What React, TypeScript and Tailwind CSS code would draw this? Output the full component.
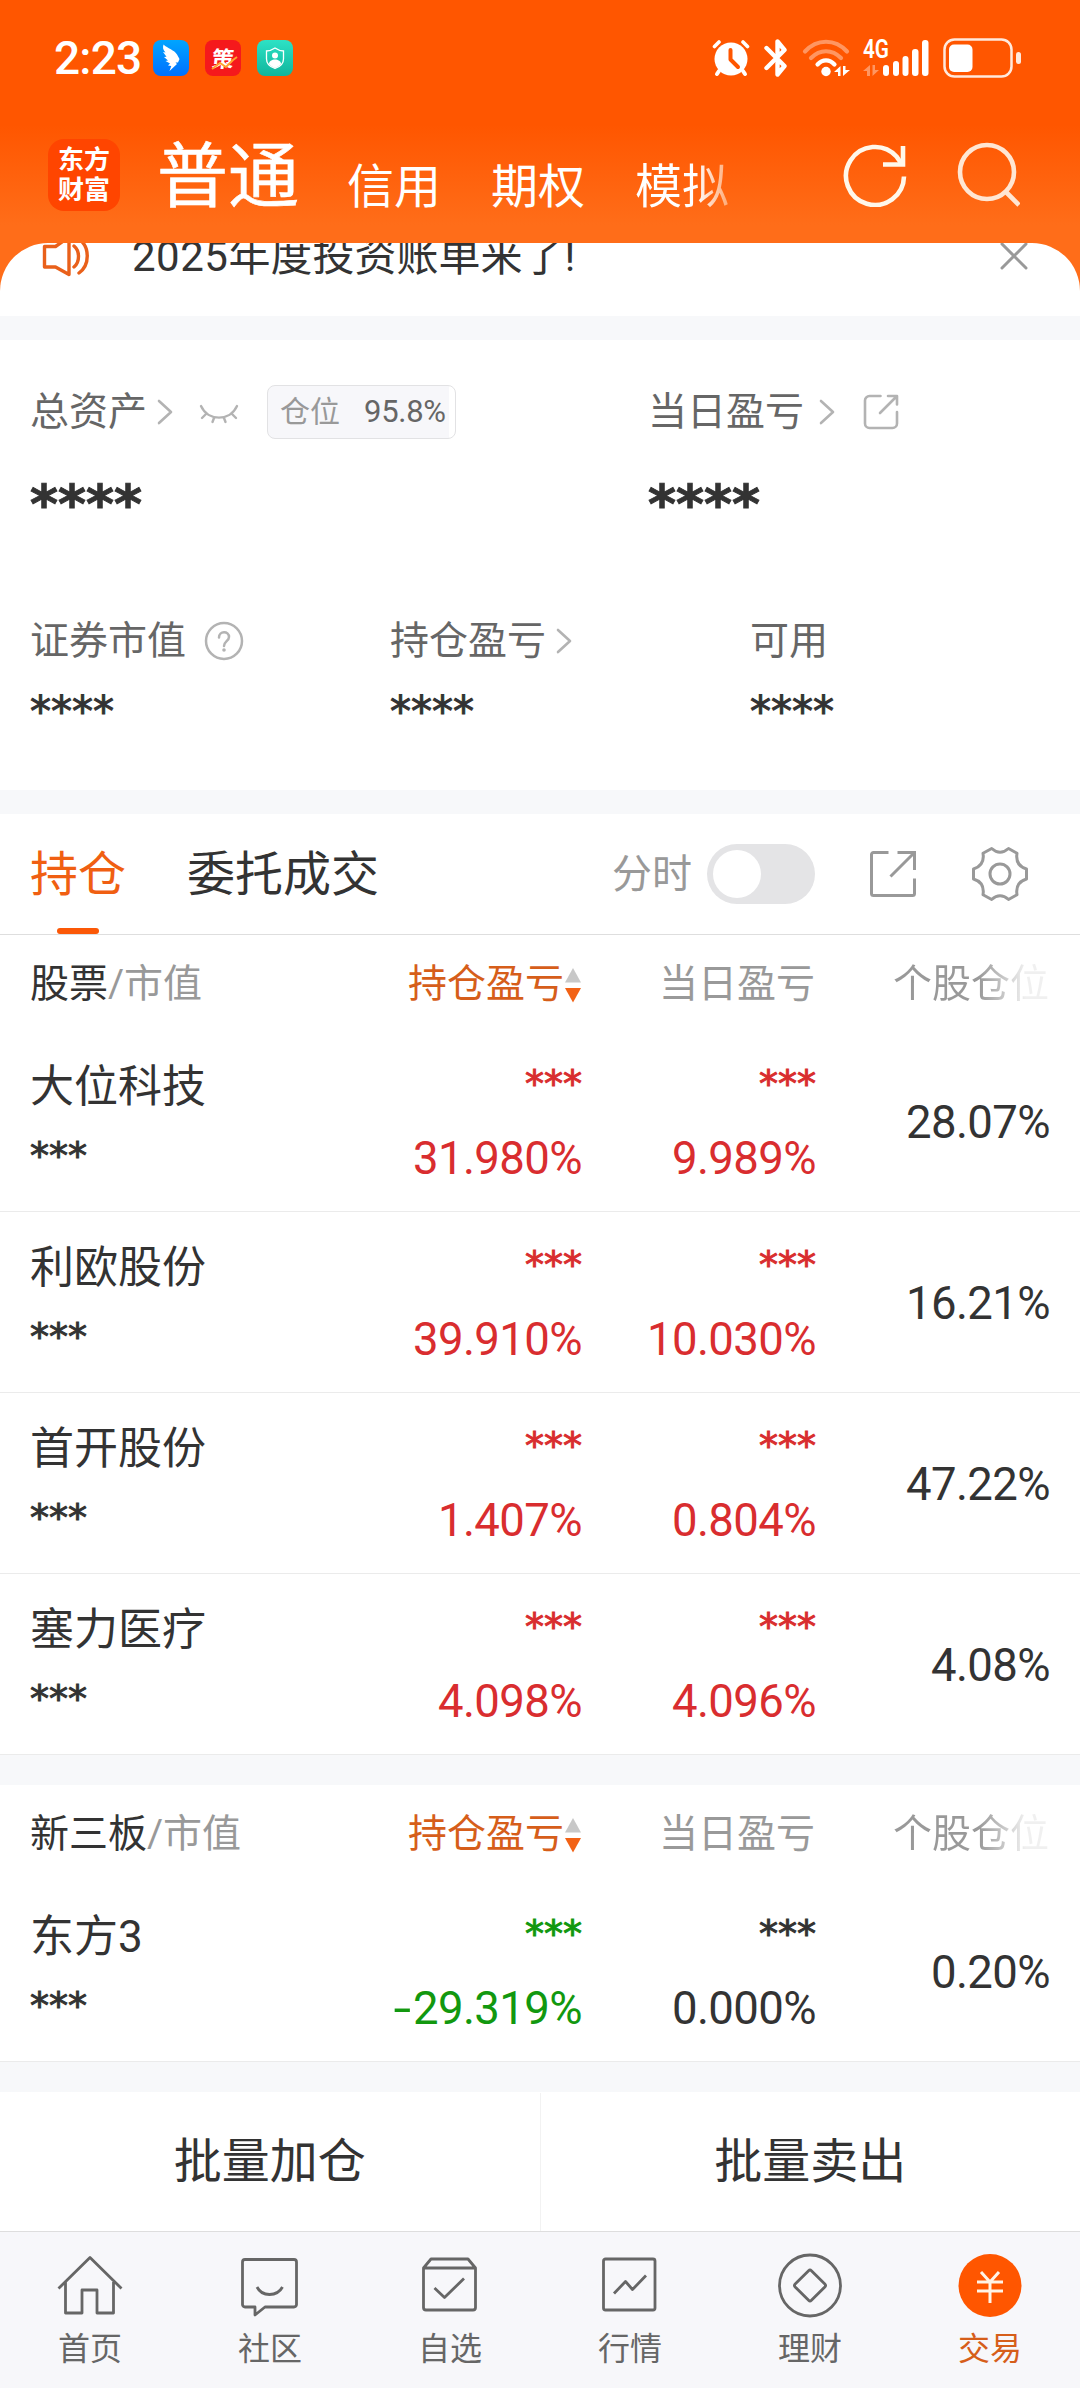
import React from 'react';
import { clsx } from 'clsx';

type Tone = 'up' | 'down' | 'flat';

interface Holding {
  name: string;
  profit: string;
  profitTone: Tone;
  today: string;
  todayTone: Tone;
  ratio: string;
}

const stocks: Holding[] = [
  { name: '大位科技', profit: '31.980%', profitTone: 'up', today: '9.989%', todayTone: 'up', ratio: '28.07%' },
  { name: '利欧股份', profit: '39.910%', profitTone: 'up', today: '10.030%', todayTone: 'up', ratio: '16.21%' },
  { name: '首开股份', profit: '1.407%', profitTone: 'up', today: '0.804%', todayTone: 'up', ratio: '47.22%' },
  { name: '塞力医疗', profit: '4.098%', profitTone: 'up', today: '4.096%', todayTone: 'up', ratio: '4.08%' }
];

const otc: Holding[] = [
  { name: '东方3', profit: '-29.319%', profitTone: 'down', today: '0.000%', todayTone: 'flat', ratio: '0.20%' }
];

const toneClass: Record<Tone, string> = {
  up: 'text-[#d92d2f]',
  down: 'text-[#12980f]',
  flat: 'text-[#333333]'
};

/* ---------- status bar ---------- */

const StatusBar = () => (
  <div className="flex h-[115px] items-center pl-[54px] pr-[59px]">
    <span className="w-[99px] text-[46px] leading-[46px] font-medium tracking-[-0.8px]">2:23</span>
    <div className="flex gap-4">
      <svg width="36" height="36" viewBox="0 0 36 36">
        <defs>
          <linearGradient id="wing" x1="0" y1="0" x2="0" y2="1">
            <stop offset="0" stopColor="#00a5ff" />
            <stop offset="1" stopColor="#0070ff" />
          </linearGradient>
        </defs>
        <rect width="36" height="36" rx="8" fill="url(#wing)" />
        <path d="M10.500 4.500c4 4 11 5.500 13.500 10l2.500 4.500-1.500 3.500h-2.500l1.500 1.500-7.500 7 1.800-5-3.300-.5 2-2-4.500-2.500 2.500-.5-4-3.500 2.500-.3-3.500-4.700 2.500.5c-2.500-2.500-3-5-2-8Z" fill="#fff" />
      </svg>
      <svg width="36" height="36" viewBox="0 0 36 36">
        <rect width="36" height="36" rx="8" fill="#f5191c" />
        <text x="20" y="27.500" fontSize="22" fontWeight="700" fill="#fff" textAnchor="middle" transform="skewX(-6)">策</text>
        <path d="M7 29l8-6 6 4 7-7 4-3" fill="none" stroke="#ffa32e" strokeWidth="2" />
      </svg>
      <svg width="36" height="36" viewBox="0 0 36 36">
        <defs>
          <linearGradient id="guard" x1="0" y1="0" x2="0" y2="1">
            <stop offset="0" stopColor="#2de2c5" />
            <stop offset="1" stopColor="#10b59c" />
          </linearGradient>
        </defs>
        <rect width="36" height="36" rx="8" fill="url(#guard)" />
        <path d="M18 8c3 2 5 3 8.500 3v8c0 5-4 8-8.500 9.500-4.500-1.500-8.500-4.500-8.500-9.500v-8c3.500 0 5.500-1 8.500-3Z" fill="none" stroke="#fff" strokeWidth="1.300" />
        <circle cx="18" cy="15.500" r="3" fill="#fff" />
        <path d="M12 24c0-6 12-6 12 0-2 2-4 3.500-6 4-2-.5-4-2-6-4Z" fill="#fff" />
      </svg>
    </div>

    <div className="ml-auto flex items-center">
      {/* alarm */}
      <svg width="38" height="38" viewBox="0 0 38 38" className="mr-[14px]">
        <path d="M7 32l-2 3M31 32l2 3" stroke="#fff" strokeWidth="4" strokeLinecap="round" />
        <path d="M2.500 7.500l4.500-4.500M35.500 7.500L31 3" stroke="#fff" strokeWidth="3.600" strokeLinecap="round" />
        <circle cx="19" cy="20" r="16.500" fill="#fff" />
        <path d="M18.500 11v9.500l7.500 7.500" fill="none" stroke="#ff5600" strokeWidth="4" strokeLinecap="round" strokeLinejoin="round" />
      </svg>
      {/* bluetooth */}
      <svg width="24" height="38" viewBox="0 0 24 38" className="mr-[14px]" fill="none" stroke="#fff" strokeWidth="4.400" strokeLinecap="round" strokeLinejoin="round">
        <path d="M2.500 29l18-18-7-8.500V14M2.500 9l18 18-7 8.500V24" />
      </svg>
      {/* wifi */}
      <svg width="48" height="38" viewBox="0 0 48 38" className="mr-[13px]" fill="none" stroke="#fff" strokeWidth="4.200" strokeLinecap="round">
        <path d="M3 12.500c12-13 30-13 42 0" opacity=".38" />
        <path d="M9 19c9-9 21-9 30 0" opacity=".38" />
        <path d="M15.500 25.500c5-5.500 12-5.500 17 0" />
        <circle cx="24" cy="32.500" r="4.700" fill="#fff" stroke="none" />
        <path d="M38.500 27v10h-2.500v-4h-4ZM41 37V27h2.500v4H48Z" fill="#fff" stroke="none" />
      </svg>
      {/* 4G signal */}
      <svg width="66" height="38" viewBox="0 0 66 38" className="mr-[14px] overflow-visible">
        <text x="0" y="19" fontSize="25.500" fontWeight="600" fill="#fff" textLength="26" lengthAdjust="spacingAndGlyphs">4G</text>
        <path d="M7 26v11H4v-5H0ZM9.500 37V26h2.500v5h4Z" fill="#fff" opacity=".38" />
        <g fill="#fff">
          <rect x="20" y="26" width="6" height="11" rx="3" />
          <rect x="30" y="22" width="6" height="15" rx="3" />
          <rect x="39.500" y="17" width="6" height="20" rx="3" />
          <rect x="49" y="10" width="6.500" height="27" rx="3" />
          <rect x="59" y="1" width="6.500" height="36" rx="3" />
        </g>
      </svg>
      {/* battery */}
      <svg width="78" height="40" viewBox="0 0 78 40">
        <rect x="1.500" y="1.500" width="67" height="37" rx="10" fill="none" stroke="#ffe9dc" strokeWidth="2.500" />
        <rect x="6" y="6.500" width="23.500" height="27.500" rx="5" fill="#fff" />
        <rect x="73" y="14" width="5" height="12" rx="2.500" fill="#ffe9dc" />
      </svg>
    </div>
  </div>
);

/* ---------- header ---------- */

const Header = () => (
  <header className="h-[243px] bg-[linear-gradient(180deg,#ff5600_0px,#ff5600_125px,#ff6d19_225px,#ff6d19_243px)] text-white">
    <StatusBar />
    <div className="flex h-[128px] items-start pl-12 pr-[60px]">
      <div className="mt-6 flex h-[72px] w-[72px] flex-col items-center justify-center rounded-2xl bg-[#ff4500] text-[26px] leading-[30px] font-bold">
        <span>东方</span>
        <span>财富</span>
      </div>
      <span className="mt-[26px] ml-[37px] text-[71px] leading-[71px] [-webkit-text-stroke:0.6px_#fff]">普通</span>
      <nav className="mt-[48px] ml-[48px] flex gap-[50px] text-[47px] leading-[47px]">
        <span>信用</span>
        <span>期权</span>
        <span className="bg-[linear-gradient(90deg,#fff_65%,#ffa873_100%)] bg-clip-text text-transparent">模拟</span>
      </nav>
      <svg width="64" height="64" viewBox="0 0 64 64" className="mt-[28px] ml-auto" fill="none" stroke="#fff8ea" strokeWidth="4.600">
        <path d="M61 33.500A29 29 0 1 1 53.500 13.500L58 20" />
        <path d="M60 3v18.500H40" />
      </svg>
      <svg width="64" height="66" viewBox="0 0 64 66" className="mt-[27px] ml-[49px]" fill="none" stroke="#ffe6d3" strokeWidth="4.600">
        <circle cx="31" cy="30" r="27" />
        <path d="M49 49l14 14" />
      </svg>
    </div>
  </header>
);

/* ---------- small icons ---------- */

const Chevron = ({ className }: { className?: string }) => (
  <svg width="16" height="26" viewBox="0 0 16 26" className={className} fill="none" stroke="#b3b3b3" strokeWidth="2.600" strokeLinecap="round" strokeLinejoin="round">
    <path d="M2 2l12 11L2 24" />
  </svg>
);

const Notice = () => (
  <div className="flex h-[73px] items-start overflow-hidden rounded-t-[48px] bg-white">
    <svg width="48" height="42" viewBox="0 0 48 42" className="mt-[-8px] ml-[42px] shrink-0" fill="none" stroke="#e9601a" strokeWidth="3.400" strokeLinejoin="round" strokeLinecap="round">
      <path d="M2.500 11.500h11L27 2v37.500L13.500 32h-11Z" />
      <path d="M32 11c6 5 6 16 0 21" />
      <path d="M37 4c11 8 11 26 0 34" />
    </svg>
    <span className="mt-[-7px] ml-[42px] text-[42px] leading-[42px] whitespace-nowrap text-[#333333]">
      <span className="tracking-[0.5px]">2025</span>年度投资账单来了!
    </span>
    <svg width="28" height="28" viewBox="0 0 28 28" className="mt-[-1px] mr-[52px] ml-auto shrink-0" stroke="#999" strokeWidth="3" strokeLinecap="round">
      <path d="M2 2l24 24M26 2L2 26" />
    </svg>
  </div>
);

/* ---------- asset overview ---------- */

interface MaskProps {
  text: string;
  className?: string;
}

// Hidden amounts are drawn with six-armed asterisks
const Mask = ({ text, className }: MaskProps) => (
  <span className={clsx("block font-['DejaVu_Sans',sans-serif] whitespace-nowrap [-webkit-text-stroke:1px_currentColor]", className)}>
    {text}
  </span>
);

const Overview = () => (
  <section className="h-[450px] bg-white pl-[30px] text-[39px] leading-[40px] text-[#666666]">
    <div className="flex pt-[45px]">
      <div className="w-[618px]">
        <div className="flex h-[54px] items-center">
          <span>总资产</span>
          <Chevron className="ml-[10px]" />
          <svg width="40" height="20" viewBox="0 0 40 20" className="mt-[3px] ml-[26px]" fill="none" stroke="#b3b3b3" strokeWidth="2.400" strokeLinecap="round">
            <path d="M2 2c7 15.500 29 15.500 36 0M7 10l-4 4M15 14l-1.500 4M25 14l1.500 4M33 10l4 4" />
          </svg>
          <div className="ml-[28px] flex h-[54px] w-[189px] items-center rounded-lg border border-[#e2e2e4] bg-[linear-gradient(90deg,#f7f7fa_181px,#fff_181px)] pl-3 text-[30px] leading-[30px]">
            <span className="text-[#999999]">仓位</span>
            <span className="ml-6 text-[31px] tracking-[-0.3px]">95.8%</span>
          </div>
        </div>
        <Mask text="****" className="mt-[40px] text-[53.5px] leading-[52px] font-bold text-[#333333]" />
      </div>
      <div>
        <div className="flex h-[54px] items-center">
          <span>当日盈亏</span>
          <Chevron className="ml-[15px]" />
          <svg width="36" height="36" viewBox="0 0 36 36" className="ml-[28px]" fill="none" stroke="#b3b3b3" strokeWidth="2.600" strokeLinecap="round" strokeLinejoin="round">
            <path d="M17.500 2H6.500a4.500 4.500 0 0 0-4.500 4.500v23a4.500 4.500 0 0 0 4.500 4.500h23a4.500 4.500 0 0 0 4.500-4.500V18" />
            <path d="M25 2h9v8.500M33 3L17 19" />
          </svg>
        </div>
        <Mask text="****" className="mt-[40px] text-[53.5px] leading-[52px] font-bold text-[#333333]" />
      </div>
    </div>

    <div className="mt-[90px] grid w-[1080px] grid-cols-3">
      <div>
        <div className="flex h-10 items-center">
          <span>证券市值</span>
          <svg width="40" height="40" viewBox="0 0 40 40" className="ml-[18px]" fill="none" stroke="#b3b3b3" strokeWidth="2.500">
            <circle cx="20" cy="20" r="18" />
            <path d="M15 16.500c0-7 10-7 10-.5 0 4-5 4.500-5 9" strokeLinecap="round" />
            <circle cx="20" cy="29" r="1.800" fill="#b3b3b3" stroke="none" />
          </svg>
        </div>
        <Mask text="****" className="mt-[30px] text-[42px] leading-[42px] text-[#333333]" />
      </div>
      <div>
        <div className="flex h-10 items-center">
          <span>持仓盈亏</span>
          <Chevron className="ml-[10px]" />
        </div>
        <Mask text="****" className="mt-[30px] text-[42px] leading-[42px] text-[#333333]" />
      </div>
      <div>
        <div className="flex h-10 items-center">可用</div>
        <Mask text="****" className="mt-[30px] text-[42px] leading-[42px] text-[#333333]" />
      </div>
    </div>
  </section>
);

/* ---------- tabs ---------- */

const TabBar = () => (
  <div className="flex h-[121px] items-center border-b border-[#dedede] bg-white pl-[30px] text-[48px] leading-[48px]">
    <div className="flex h-[120px] flex-col items-center text-[#f05f12]">
      <span className="mt-[37px]">持仓</span>
      <span className="mt-[29px] h-[6px] w-[42px] rounded-full bg-[#fb5807]" />
    </div>
    <span className="mt-[2px] ml-[61px] text-[#333333]">委托成交</span>
    <span className="mt-[2px] ml-[233px] text-[40px] text-[#999999]">分时</span>
    <div className="ml-[15px] h-[60px] w-[108px] rounded-full bg-[#e4e4e6] p-[6px]">
      <div className="h-12 w-12 rounded-full bg-white" />
    </div>
    <svg width="48" height="48" viewBox="0 0 48 48" className="ml-[54px]" fill="none" stroke="#999" strokeWidth="3">
      <path d="M19.500 2.500H4.500a2 2 0 0 0-2 2v39a2 2 0 0 0 2 2h39a2 2 0 0 0 2-2V28.500" />
      <path d="M28.500 2.500h17V20M44.500 3.500L21.500 26.500" />
    </svg>
    <svg width="56" height="56" viewBox="0 0 56 56" className="ml-[55px]" fill="none" stroke="#999" strokeWidth="3" strokeLinejoin="round">
      <path d="M19.700 2.500Q28 10 36.500 2.500L45 7.200Q43 19.500 54.500 23v10Q43 36.500 45 48.800L36.500 53.500Q28 46 19.700 53.500L11 48.800Q13 36.500 1.500 33V23Q13 19.500 11 7.200Z" />
      <circle cx="28" cy="28" r="10" />
    </svg>
  </div>
);

/* ---------- holdings ---------- */

// The minus sign is a bit wider than the font's hyphen
const Percent = ({ value }: { value: string }) => {
  if (!value.startsWith('-')) return <>{value}</>;
  return (
    <>
      <span className="mr-[5px] inline-block scale-x-[1.400]">-</span>
      {value.slice(1)}
    </>
  );
};

const HoldingTable = ({ title, rows }: { title: string; rows: Holding[] }) => (
  <section className="bg-white">
    <div className="flex h-24 items-center pt-[2px] pl-[30px] text-[39px] leading-[40px] text-[#999999]">
      <span className="w-[378px]">
        <span className="text-[#333333]">{title}</span>/市值
      </span>
      <span className="text-[#d65e1a]">持仓盈亏</span>
      <svg width="18" height="36" viewBox="0 0 18 36" className="mt-[2px]">
        <path d="M9 1l8 14.500H1Z" fill="#c8c8c8" />
        <path d="M9 35.500L1 21h16Z" fill="#f26215" />
      </svg>
      <span className="w-[233px] text-right">当日盈亏</span>
      <span className="ml-[78px] bg-[linear-gradient(90deg,#999_55%,#f0f0f0_85%)] bg-clip-text text-transparent">个股仓位</span>
    </div>
    {rows.map(row => (
      <div key={row.name} className="flex h-[181px] border-b border-[#ebebeb] pl-[30px] text-[45.5px] leading-[46px] tracking-[-0.6px] text-[#333333]">
        <div className="w-[318px]">
          <div className="mt-[34px] text-[44px] leading-[44px] tracking-normal">{row.name}</div>
          <Mask text="***" className="mt-[28px] text-[38px] leading-[38px] tracking-normal" />
        </div>
        <div className={clsx('w-[234px] text-right', toneClass[row.profitTone])}>
          <Mask text="***" className="mt-[34px] text-[38px] leading-[38px] tracking-normal" />
          <div className="mt-[33px]">
            <Percent value={row.profit} />
          </div>
        </div>
        <div className={clsx('w-[234px] text-right', toneClass[row.todayTone])}>
          <Mask text="***" className="mt-[34px] text-[38px] leading-[38px] tracking-normal" />
          <div className="mt-[33px]">
            <Percent value={row.today} />
          </div>
        </div>
        <div className="mt-[69px] w-[234px] text-right">{row.ratio}</div>
      </div>
    ))}
  </section>
);

/* ---------- bottom ---------- */

const BatchActions = () => (
  <div className="flex h-[139px] bg-white pt-px text-[48px] leading-[48px] text-[#333333]">
    <div className="flex flex-1 items-center justify-center border-r border-[#f2f2f2]">批量加仓</div>
    <div className="flex flex-1 items-center justify-center">批量卖出</div>
  </div>
);

const navItems: { label: string; active?: boolean; icon: React.ReactNode }[] = [
  {
    label: '首页',
    icon: <path d="M4.500 38.500L36 7.500l31.500 31M11.500 32v31H28V40h15v23h16.500V32" />
  },
  {
    label: '社区',
    icon: (
      <>
        <path d="M11 9.500h49a2.500 2.500 0 0 1 2.500 2.500v42.500a2.500 2.500 0 0 1-2.500 2.500H31l-10 8v-8H11a2.500 2.500 0 0 1-2.500-2.500V12A2.500 2.500 0 0 1 11 9.500Z" />
        <path d="M23 37c5 10 20 10 25.500 0" />
      </>
    )
  },
  {
    label: '自选',
    icon: (
      <>
        <path d="M9.500 18L17 9h37l7.500 9v39.500a2.500 2.500 0 0 1-2.500 2.500H12a2.500 2.500 0 0 1-2.500-2.500ZM9.500 18h52" />
        <path d="M20.500 38l10 9.500L50 28.500" />
      </>
    )
  },
  {
    label: '行情',
    icon: (
      <>
        <rect x="9.500" y="9" width="51.500" height="51" rx="2" />
        <path d="M20 43.500L31.500 31.500l7 8L52 25.500" />
      </>
    )
  },
  {
    label: '理财',
    icon: (
      <>
        <circle cx="36" cy="35.500" r="30.500" />
        <rect x="24.500" y="24" width="23" height="23" rx="2" transform="rotate(45 36 35.500)" />
      </>
    )
  },
  {
    label: '交易',
    active: true,
    icon: (
      <>
        <circle cx="36" cy="35.500" r="31.500" fill="#ff5600" stroke="none" />
        <path d="M27 22l9 10 9-10M23 32h26M23 41h26M36 32v21" stroke="#fff3e6" strokeWidth="3" />
      </>
    )
  }
];

const BottomNav = () => (
  <nav className="grid h-[157px] grid-cols-6 border-t border-[#dedede] bg-[#f7f7fa]">
    {navItems.map(({ label, active, icon }) => (
      <div
        key={label}
        className={clsx('flex flex-col items-center pt-[18px] text-[32px] leading-[32px]', active ? 'text-[#d65e1a]' : 'text-[#666666]')}
      >
        <svg width="72" height="72" viewBox="0 0 72 72" fill="none" stroke="#666" strokeWidth="2.800" strokeLinejoin="round">
          {icon}
        </svg>
        <span className="mt-[11px]">{label}</span>
      </div>
    ))}
  </nav>
);

export default function App() {
  return (
    <div className="h-[2388px] w-[1080px] overflow-hidden bg-[#f7f8fa] font-['Roboto','Noto_Sans_CJK_SC',sans-serif]">
      <Header />
      <div className="bg-[linear-gradient(180deg,#ff6d19_60px,#fff_60px)]">
        <Notice />
      </div>
      <div className="h-6" />
      <Overview />
      <div className="h-6" />
      <TabBar />
      <HoldingTable title="股票" rows={stocks} />
      <div className="h-[30px]" />
      <HoldingTable title="新三板" rows={otc} />
      <div className="h-[30px]" />
      <BatchActions />
      <BottomNav />
    </div>
  );
}
